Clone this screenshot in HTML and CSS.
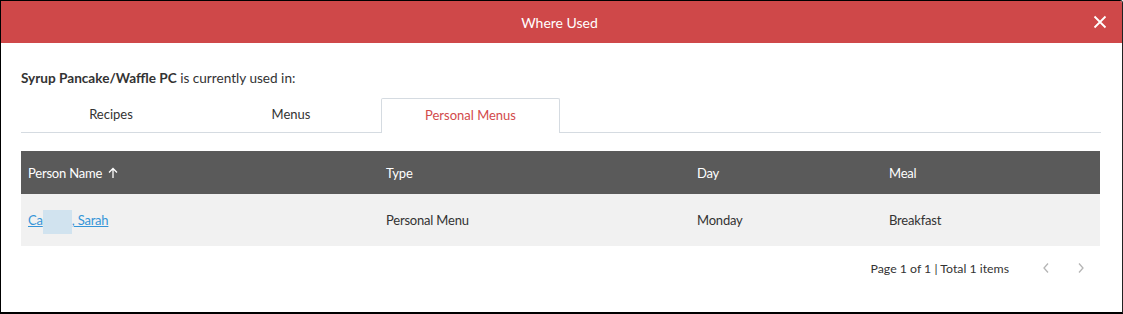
FILE: index.html
```html
<!DOCTYPE html>
<html>
<head>
<meta charset="utf-8">
<link rel="stylesheet" href="styles.css">
</head>
<body>
<div class="dialog">
  <div class="header">
    <span class="title">Where Used</span>
    <button class="close" aria-label="Close">
      <svg width="14" height="14" viewBox="0 0 14 14"><path d="M1.5 1.5 L12.5 12.5 M12.5 1.5 L1.5 12.5" stroke="#fff" stroke-width="1.8" fill="none"/></svg>
    </button>
  </div>
  <div class="body">
    <p class="intro"><strong>Syrup Pancake/Waffle PC</strong> is currently used in:</p>
    <div class="tabs">
      <div class="tab">Recipes</div>
      <div class="tab">Menus</div>
      <div class="tab active">Personal Menus</div>
    </div>
    <table class="grid">
      <colgroup>
        <col class="c1"><col class="c2"><col class="c3"><col class="c4">
      </colgroup>
      <thead>
        <tr>
          <th>Person Name <svg class="sort" width="10" height="12" viewBox="0 0 10 12"><path d="M5 11 V1.5 M1 5.5 L5 1.5 L9 5.5" stroke="#fff" stroke-width="1.3" fill="none"/></svg></th>
          <th>Type</th>
          <th>Day</th>
          <th>Meal</th>
        </tr>
      </thead>
      <tbody>
        <tr>
          <td><a href="#" class="link">Ca<span class="redact"></span>, Sarah</a></td>
          <td>Personal Menu</td>
          <td>Monday</td>
          <td>Breakfast</td>
        </tr>
      </tbody>
    </table>
    <div class="pager">
      <span class="info">Page 1 of 1 | Total 1 items</span>
      <span class="nav">
        <svg width="8" height="12" viewBox="0 0 8 12"><path d="M6 1.5 L2 6 L6 10.5" stroke="#b5b5b5" stroke-width="1.3" fill="none"/></svg>
      </span>
      <span class="nav">
        <svg width="8" height="12" viewBox="0 0 8 12"><path d="M2 1.5 L6 6 L2 10.5" stroke="#b5b5b5" stroke-width="1.3" fill="none"/></svg>
      </span>
    </div>
  </div>
</div>
</body>
</html>
```
FILE: styles.css
```css
* { box-sizing: border-box; }
html, body { margin: 0; padding: 0; background: #fff; }
body {
  font-family: Lato, "Open Sans", "Liberation Sans", sans-serif;
  font-size: 13px;
  color: #333;
}
.dialog {
  width: 1123px;
  height: 314px;
  border-top: 1px solid #000;
  border-left: 1px solid #000;
  border-right: 1px solid #222;
  border-bottom: 2px solid #000;
  border-top-right-radius: 3px;
  background: #fff;
  overflow: hidden;
}
.header {
  height: 42px;
  background: #cf4849;
  display: flex;
  align-items: center;
  justify-content: center;
  position: relative;
}
.title {
  color: #fff;
  font-size: 14px;
  margin-left: -4px;
}
.close {
  position: absolute;
  right: 15px;
  top: 14px;
  background: none;
  border: 0;
  padding: 0;
  width: 14px;
  height: 14px;
  display: flex;
}
.body {
  padding: 0 21px 0 20px;
}
.intro {
  margin: 0;
  padding-top: 27px;
  line-height: 16px;
  height: 55px;
  color: #333;
  font-size: 13.6px;
}
.intro strong { font-weight: 700; }
.tabs {
  display: flex;
  height: 35px;
  border-bottom: 1px solid #d5dbe1;
}
.tab {
  width: 180px;
  display: flex;
  align-items: center;
  justify-content: center;
  padding-bottom: 2px;
  color: #333;
}
.tab.active {
  width: 179px;
  border: 1px solid #d5dbe1;
  border-bottom: 0;
  border-radius: 2px 2px 0 0;
  background: #fff;
  color: #d24a4b;
  margin-bottom: -1px;
  height: 35px;
}
.grid {
  margin-top: 18px;
  width: 1079px;
  border-collapse: collapse;
  table-layout: fixed;
}
.c1 { width: 358px; }
.c2 { width: 311px; }
.c3 { width: 192px; }
.c4 { width: 218px; }
.grid th {
  background: #5a5a5a;
  color: #fff;
  font-weight: 400;
  text-align: left;
  height: 43px;
  padding: 0 7px;
  letter-spacing: -0.2px;
}
.sort { vertical-align: -1px; margin-left: 3px; }
.grid td {
  background: #f1f1f1;
  height: 52px;
  padding: 0 7px;
  color: #333;
  letter-spacing: -0.2px;
}
.link {
  color: #3595d8;
  text-decoration: underline;
}
.redact {
  display: inline-block;
  width: 29px;
  height: 24px;
  background: #d1e3ef;
  vertical-align: middle;
  margin: -6px 0;
}
.pager {
  display: flex;
  justify-content: flex-end;
  align-items: center;
  height: 44px;
  padding-right: 3px;
  font-size: 12.3px;
}
.info { margin-right: 19px; }
.nav {
  width: 35px;
  display: flex;
  justify-content: center;
}
```
